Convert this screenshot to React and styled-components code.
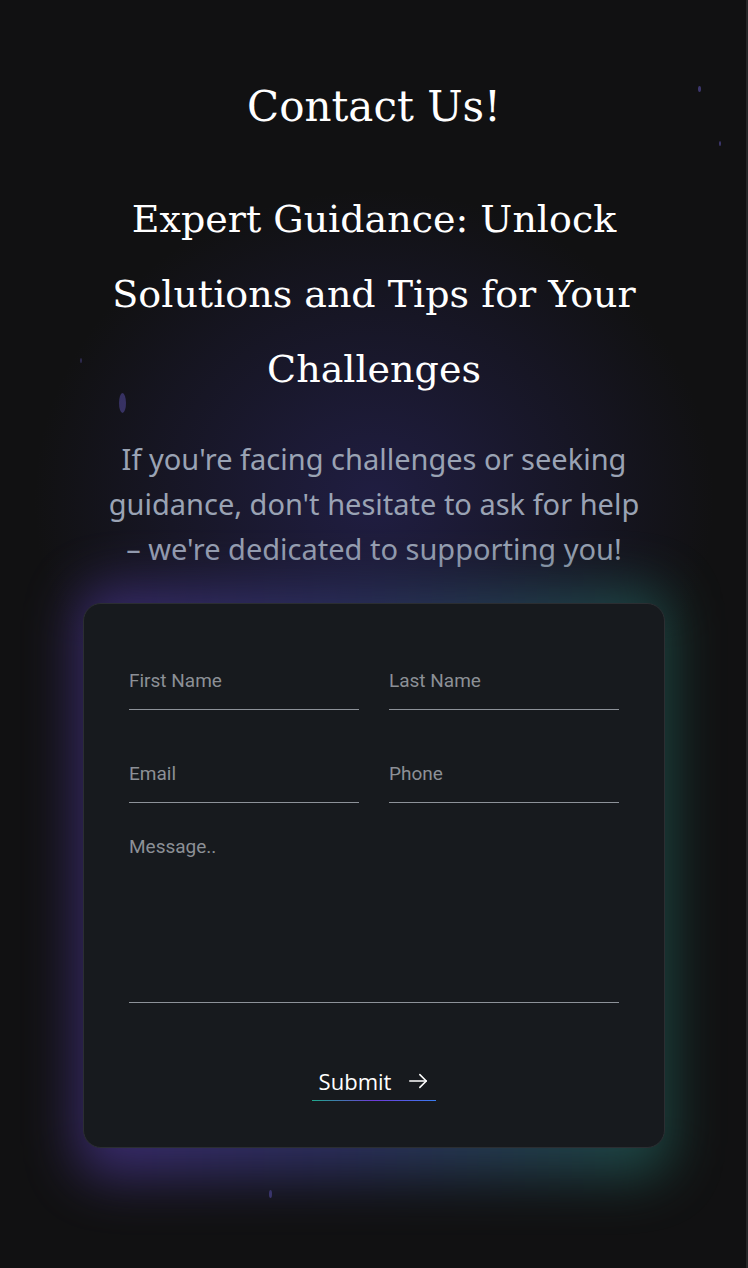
import React from 'react';
import styled, { createGlobalStyle } from 'styled-components';

const GlobalStyle = createGlobalStyle`
  html, body {
    margin: 0;
    padding: 0;
    background: #111112;
  }
  * {
    box-sizing: border-box;
  }
`;

const Page = styled.main`
  position: relative;
  min-height: 1268px;
  overflow: hidden;
  background:
    radial-gradient(ellipse 340px 310px at 50% 500px, rgba(42, 38, 98, 0.6), rgba(17, 17, 18, 0) 100%),
    #111112;
  box-shadow: inset -2px 0 0 #262628;
  padding: 80px 0 120px;
  display: flex;
  flex-direction: column;
  align-items: center;
`;

const Particle = styled.span`
  position: absolute;
  border-radius: 50%;
  background: rgba(90, 80, 170, ${(p) => p.$o || 0.6});
  width: ${(p) => p.$w}px;
  height: ${(p) => p.$h}px;
`;

const Column = styled.div`
  position: relative;
  z-index: 1;
  width: 582px;
  display: flex;
  flex-direction: column;
  align-items: center;
  text-align: center;
`;

const Title = styled.h1`
  margin: 0;
  font-family: 'DejaVu Serif', 'Liberation Serif', serif;
  font-weight: 400;
  font-size: 42px;
  line-height: 54px;
  color: #ffffff;
`;

const Subtitle = styled.h2`
  margin: 48px 0 0;
  font-family: 'DejaVu Serif', 'Liberation Serif', serif;
  font-weight: 400;
  font-size: 38px;
  line-height: 75px;
  color: #ffffff;
`;

const Lead = styled.p`
  margin: 29px 0 0;
  font-family: 'Noto Sans', 'Open Sans', sans-serif;
  font-size: 29px;
  line-height: 45px;
  color: #9aa3b4;
`;

const NoWrap = styled.span`
  white-space: nowrap;
`;

const CardWrap = styled.div`
  position: relative;
  margin-top: 32px;
  width: 582px;

  &::before {
    content: '';
    position: absolute;
    inset: -16px -6px -30px -6px;
    border-radius: 30px;
    background: linear-gradient(90deg, #3c2b72 0%, #2c3060 45%, #1c4c44 100%);
    filter: blur(26px);
    opacity: 0.95;
  }
`;

const Card = styled.form`
  position: relative;
  background: #171a1e;
  border: 1px solid #2b2e32;
  border-radius: 18px;
  padding: 54px 45px 46px;
  display: flex;
  flex-direction: column;
`;

const Grid = styled.div`
  display: grid;
  grid-template-columns: 1fr 1fr;
  column-gap: 30px;
  row-gap: 41px;
`;

const Field = styled.input`
  width: 100%;
  height: 52px;
  padding: 0 0 6px;
  background: transparent;
  border: 0;
  border-bottom: 1px solid #8d9299;
  outline: none;
  font-family: Roboto, 'Liberation Sans', sans-serif;
  font-size: 19px;
  color: #e5e7ea;

  &::placeholder {
    color: #8c9096;
  }
`;

const Message = styled.textarea`
  margin-top: 31px;
  width: 100%;
  height: 169px;
  padding: 2px 0 0;
  resize: none;
  background: transparent;
  border: 0;
  border-bottom: 1px solid #8d9299;
  outline: none;
  font-family: Roboto, 'Liberation Sans', sans-serif;
  font-size: 19px;
  line-height: 22px;
  color: #e5e7ea;

  &::placeholder {
    color: #8c9096;
  }
`;

const Actions = styled.div`
  margin-top: 64px;
  display: flex;
  justify-content: center;
`;

const Submit = styled.button`
  position: relative;
  display: flex;
  align-items: center;
  gap: 16px;
  padding: 0 7px 6px;
  background: none;
  border: 0;
  cursor: pointer;
  font-family: 'Open Sans', 'Noto Sans', sans-serif;
  font-size: 22px;
  line-height: 28px;
  color: #ffffff;

  &::after {
    content: '';
    position: absolute;
    left: 0;
    right: 0;
    bottom: 0;
    height: 1px;
    background: linear-gradient(90deg, #1fa98c 0%, #6e3ad8 50%, #3a7cf0 100%);
  }
`;

const particles = [
  { x: 698, y: 86, w: 3, h: 6 },
  { x: 719, y: 141, w: 2, h: 5 },
  { x: 80, y: 358, w: 2, h: 5, o: 0.4 },
  { x: 119, y: 393, w: 7, h: 20, o: 0.5 },
  { x: 269, y: 1190, w: 3, h: 8 },
];

export default function App() {
  return (
    <>
      <GlobalStyle />
      <Page>
        {particles.map((p, i) => (
          <Particle
            key={i}
            $w={p.w}
            $h={p.h}
            $o={p.o}
            style={{ left: p.x, top: p.y }}
          />
        ))}
        <Column>
          <Title>Contact Us!</Title>
          <Subtitle>
            Expert Guidance: Unlock Solutions and Tips for Your Challenges
          </Subtitle>
          <Lead>
            If you're facing challenges or seeking guidance, don't hesitate to
            ask for help <NoWrap>– we're</NoWrap> dedicated to supporting you!
          </Lead>
          <CardWrap>
            <Card onSubmit={(e) => e.preventDefault()}>
              <Grid>
                <Field type="text" placeholder="First Name" />
                <Field type="text" placeholder="Last Name" />
                <Field type="email" placeholder="Email" />
                <Field type="tel" placeholder="Phone" />
              </Grid>
              <Message placeholder="Message.." />
              <Actions>
                <Submit type="submit">
                  Submit
                  <svg width="22" height="22" viewBox="0 0 24 24" fill="none" stroke="currentColor" strokeWidth="1.7" strokeLinecap="round" strokeLinejoin="round">
                    <path d="M3 12h18" />
                    <path d="M14 5l7 7-7 7" />
                  </svg>
                </Submit>
              </Actions>
            </Card>
          </CardWrap>
        </Column>
      </Page>
    </>
  );
}
